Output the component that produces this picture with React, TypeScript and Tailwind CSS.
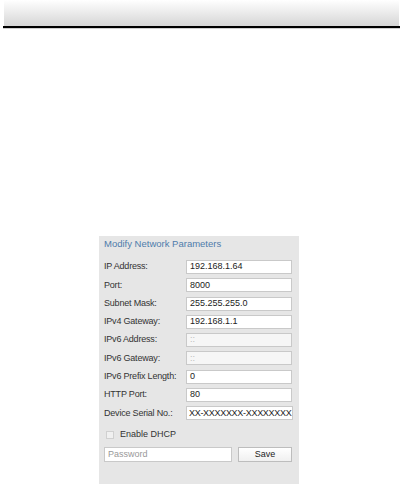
const rows: { label: string; value: string; disabled?: boolean }[] = [
  { label: "IP Address:", value: "192.168.1.64" },
  { label: "Port:", value: "8000" },
  { label: "Subnet Mask:", value: "255.255.255.0" },
  { label: "IPv4 Gateway:", value: "192.168.1.1" },
  { label: "IPv6 Address:", value: "::", disabled: true },
  { label: "IPv6 Gateway:", value: "::", disabled: true },
  { label: "IPv6 Prefix Length:", value: "0" },
  { label: "HTTP Port:", value: "80" },
  { label: "Device Serial No.:", value: "XX-XXXXXXX-XXXXXXXX" },
];

export default function App() {
  return (
    <div className="w-[403px] h-[484px] bg-white overflow-hidden flex flex-col" style={{ fontFamily: '"Liberation Sans", Arial, sans-serif' }}>
      <div className="mx-[4px] h-[26px] bg-gradient-to-b from-white to-[#d6d6d6]" />
      <div className="mx-[3px] h-[2px] bg-black" />
      <div className="mx-[3px] h-[1px] bg-[#cfcfcf]" />

      <div className="mt-[207px] ml-[99px] w-[200px] flex-1 bg-[#e6e6e6] pl-[5px] pr-[6px] pt-[2px] flex flex-col">
        <div className="text-[9.5px] leading-[12px] text-[#4f7cab]">Modify Network Parameters</div>
        <div className="mt-[10px] flex flex-col gap-[4.3px]">
          {rows.map((r) => {
            const serial = r.label.startsWith("Device");
            return (
              <div key={r.label} className="flex items-center h-[14px]">
                <span className="w-[82px] shrink-0 text-[9px] text-[#333] tracking-[-0.2px] whitespace-nowrap">{r.label}</span>
                <div
                  className={
                    "h-[14px] flex items-center border border-[#c9c9c9] text-[9px] whitespace-nowrap overflow-hidden " +
                    (r.disabled
                      ? "bg-[#f6f6f6] text-[#bbb] w-[106px] px-[3px]"
                      : serial
                        ? "bg-white text-[#222] w-[108px] px-[2px] tracking-[-0.3px]"
                        : "bg-white text-[#222] w-[106px] px-[3px]")
                  }
                >
                  {r.value}
                </div>
              </div>
            );
          })}
        </div>
        <div className="mt-[8px] flex items-center gap-[6px] pl-[2px]">
          <div className="w-[8px] h-[8px] border border-[#d0d0d0] bg-[#f0f0f0]" />
          <span className="text-[9px] text-[#333]">Enable DHCP</span>
        </div>
        <div className="mt-[5px] flex items-center">
          <div className="w-[128px] h-[15px] border border-[#c9c9c9] bg-white px-[3px] flex items-center text-[9px] text-[#999]">
            Password
          </div>
          <div className="ml-[6px] w-[54px] h-[15px] border border-[#bdbdbd] bg-gradient-to-b from-white to-[#f0f0f0] flex items-center justify-center text-[9px] text-[#222]">
            Save
          </div>
        </div>
      </div>
    </div>
  );
}
